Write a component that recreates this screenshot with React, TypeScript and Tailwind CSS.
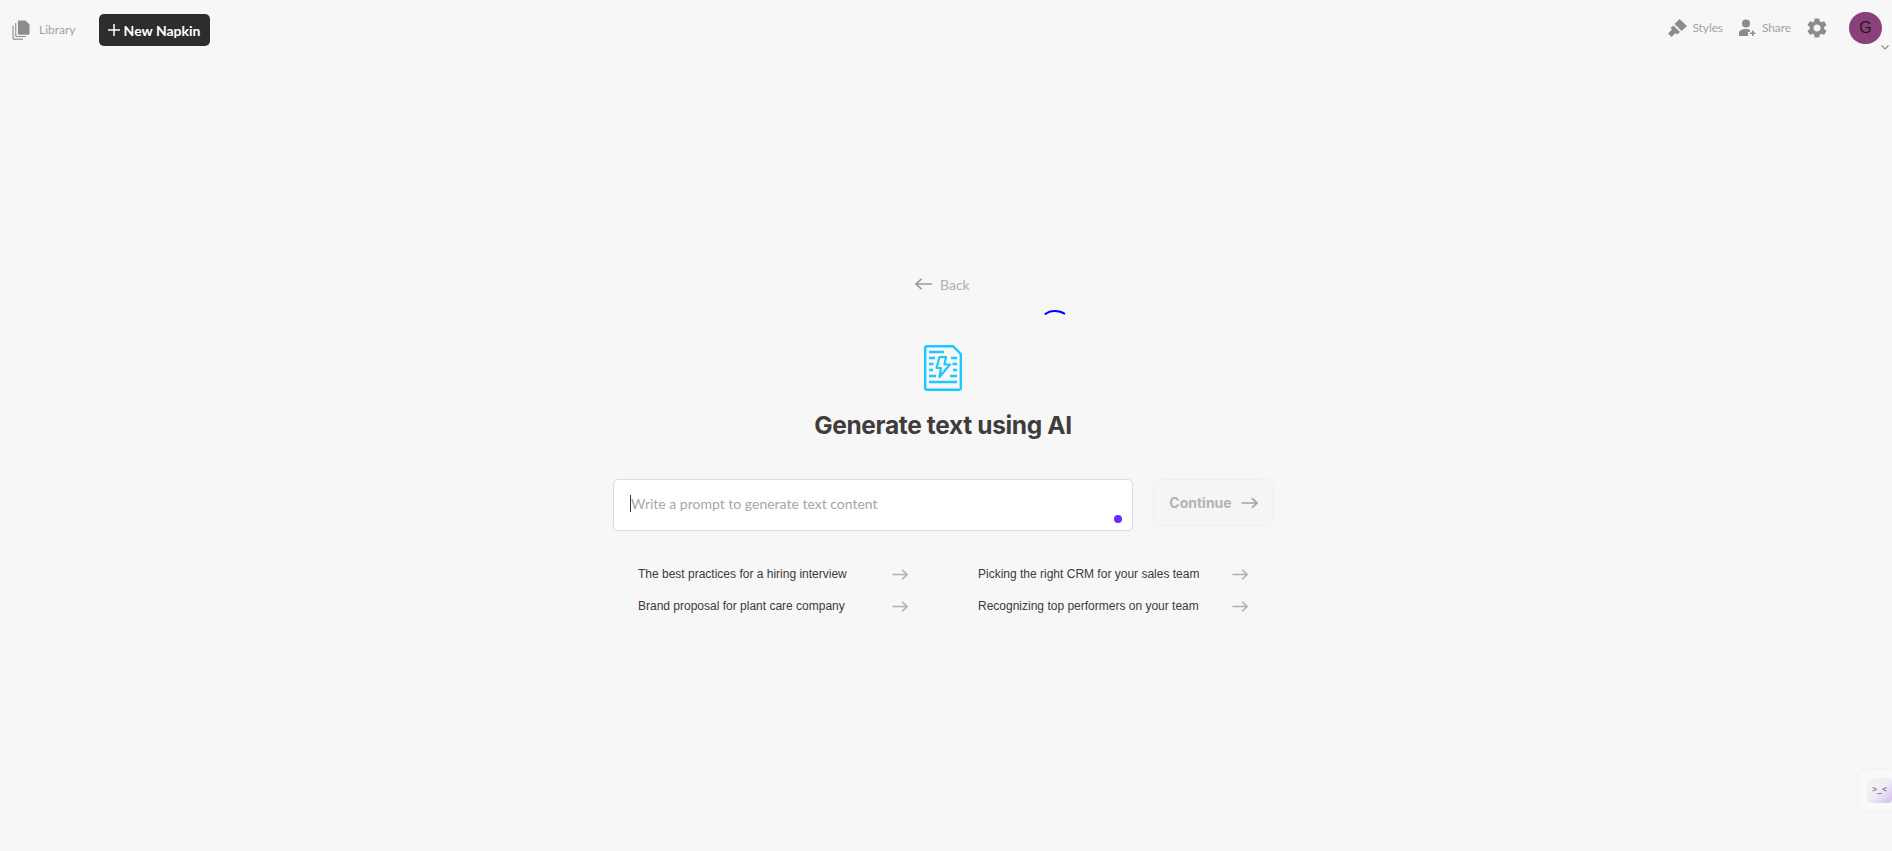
import React from "react";
import { MdSettings } from "react-icons/md";

const Arrow = ({ className = "" }: { className?: string }) => (
  <svg viewBox="0 0 18 12" className={className} fill="none" stroke="currentColor" strokeWidth="1.6">
    <path d="M0.5 6H17M11.5 0.8L17 6L11.5 11.2" />
  </svg>
);

const DocIcon = () => (
  <svg viewBox="0 0 38 46" className="w-[38px] h-[46px]" fill="none" stroke="#1cc8ff" strokeWidth="2.4">
    <path d="M3 1.200H29L36.800 9V43A1.800 1.800 0 0 1 35 44.800H3A1.800 1.800 0 0 1 1.200 43V3A1.800 1.800 0 0 1 3 1.200Z" strokeLinejoin="round" />
    <path d="M5 7H20M5 13H11M27 13H33M5 19H9.500M28.500 19H33M5 25H9M29 25H33M5 31H12M26 31H33M5 37H33" />
    <path d="M22 12H15.500L12.500 23H17L15.500 32L26 19.500H20.500L22 12Z" strokeLinejoin="round" strokeWidth="2.200" />
  </svg>
);

const suggestions = [
  ["The best practices for a hiring interview", "Picking the right CRM for your sales team"],
  ["Brand proposal for plant care company", "Recognizing top performers on your team"],
];

export default function App() {
  return (
    <div className="relative h-screen overflow-hidden bg-[#f7f7f7] font-['Lato',sans-serif]">
      <header className="flex h-[56px] items-start justify-between">
        <div className="flex items-center pl-[12px] pt-[14px]">
          <svg viewBox="0 0 18 20" className="h-[20px] w-[18px]" fill="#8c8c8c">
            <path d="M7.200 .5H13.500L17.500 4.500V13.500A1.300 1.300 0 0 1 16.200 14.800H7.200A1.300 1.300 0 0 1 5.900 13.500V1.800A1.300 1.300 0 0 1 7.200 .5Z" />
            <path d="M3.200 3V15.700A1.300 1.300 0 0 0 4.500 17H14V15.900H5A.7 .7 0 0 1 4.300 15.200V3Z" />
            <path d="M.5 5.500V18.500A1.300 1.300 0 0 0 1.800 19.800H11V18.600H2.300A.7 .7 0 0 1 1.600 17.900V5.500Z" />
          </svg>
          <span className="ml-[9px] text-[12px] text-[#a3a3a3]">Library</span>
          <button className="ml-[23px] flex h-[32px] w-[111px] items-center justify-center gap-[4px] rounded-[5px] bg-[#2d2d2d] text-[14px] font-bold text-white">
            <svg viewBox="0 0 12 12" className="h-[12px] w-[12px]" stroke="white" strokeWidth="1.500"><path d="M6 0V12M0 6H12" /></svg>
            New Napkin
          </button>
        </div>
        <div className="flex items-center pt-[12px]">
          <svg viewBox="0 0 19 18" className="h-[18px] w-[19px]" fill="#8c8c8c">
            <path d="M11.500 0L19 7L13.500 12L6.500 5Z" />
            <path d="M5.500 6.500L12 13L9 15.500L7.500 14L3.500 18L0 14.500L4 10.500L2.500 9Z" />
          </svg>
          <span className="ml-[5px] text-[12px] tracking-[-0.1px] text-[#a3a3a3]">Styles</span>
          <svg viewBox="0 0 18 18" className="ml-[16px] h-[18px] w-[18px]" fill="#8c8c8c">
            <circle cx="7" cy="4.500" r="4" />
            <path d="M0 17V14C0 11.500 3.500 10 7 10C8.500 10 10 10.300 11 10.800V13H9V17Z" />
            <path d="M13 11.500H14.500V13.500H16.500V15H14.500V17H13V15H11V13.500H13Z" />
          </svg>
          <span className="ml-[5px] text-[12px] tracking-[-0.1px] text-[#a3a3a3]">Share</span>
          <MdSettings className="ml-[14px] h-[24px] w-[24px] text-[#8c8c8c]" />
          <div className="relative ml-[20px] mr-[10px] h-[32px] w-[33px] rounded-full bg-[#8b3f7b] text-center text-[16px] leading-[32px] text-[#1a1a1a] font-['Liberation_Sans',sans-serif]">
            G
            <svg viewBox="0 0 8 5" className="absolute left-[32px] top-[33px] h-[5px] w-[8px]" fill="none" stroke="#8c8c8c" strokeWidth="1.200"><path d="M.5 .5L4 4L7.500 .5" /></svg>
          </div>
        </div>
      </header>

      <main className="mx-auto flex w-[666px] flex-col">
        <div className="relative mt-[217px] flex h-[22px] items-center pl-[302px] text-[#a8a8a8]">
          <svg viewBox="0 0 17 12" className="h-[12px] w-[17px] text-[#9a9a9a]" fill="none" stroke="currentColor" strokeWidth="1.600">
            <path d="M17 6H1M6.500 .8L1 6L6.500 11.200" />
          </svg>
          <span className="ml-[8px] text-[14px] text-[#b0b0b0]">Back</span>
          <svg viewBox="0 0 22 6" className="absolute left-[431px] top-[36px] h-[6px] w-[22px]" fill="none" stroke="#0000ff" strokeWidth="2">
            <path d="M.8 5.500C6 .8 15 .8 21 5" />
          </svg>
        </div>

        <div className="mt-[50px] flex flex-col items-center pr-[6px]">
          <DocIcon />
          <h1 className="mt-[16px] text-[24.5px] font-bold leading-[36px] tracking-[-0.35px] text-[#403c3c] font-['Inter',sans-serif]">
            Generate text using AI
          </h1>
        </div>

        <div className="mt-[36px] flex items-start gap-[20px]">
          <div className="relative h-[52px] w-[520px] rounded-[5px] border border-[#dcdcdc] bg-white pl-[16px] pt-[13px] text-[14px] leading-[22px]">
            <span className="border-l border-[#333] text-[#a6a6a6]">Write a prompt to generate text content</span>
            <span className="absolute right-[10px] bottom-[7px] h-[8px] w-[8px] rounded-full bg-[#6a2cff]" />
          </div>
          <button className="flex h-[47px] w-[120px] items-center justify-center gap-[9px] rounded-[8px] border border-[#efefef] bg-[#f5f5f5] pl-[1px] text-[14px] font-bold text-[#b3b3b3] shadow-[0_0_8px_rgba(0,0,0,0.02)] font-['Inter',sans-serif]">
            Continue
            <Arrow className="h-[12px] w-[17px] text-[#a3a3a3]" />
          </button>
        </div>

        <div className="mt-[36px] flex flex-col gap-[18px]">
          {suggestions.map((row) => (
            <div key={row[0]} className="flex h-[14px] items-center">
              {row.map((t) => (
                <div key={t} className="flex w-[340px] shrink-0 items-center pl-[25px] text-[12px] text-[#3a3a3a] font-['Liberation_Sans',sans-serif]">
                  <span className="w-[254px]">{t}</span>
                  <Arrow className="h-[11px] w-[16px] text-[#b0b0b0]" />
                </div>
              ))}
            </div>
          ))}
        </div>
      </main>

      <div className="absolute bottom-[41px] right-0 flex h-[40px] w-[33px] items-center justify-end rounded-l-[8px] bg-[#f9f9f9] shadow-[0_0_6px_rgba(0,0,0,0.03)]">
        <div className="flex h-[25px] w-[25px] items-center justify-center rounded-[4px] bg-gradient-to-br from-[#f4f4f4] via-[#efecf5] to-[#d4bdf0] text-[8px] font-bold text-[#808080] font-['DejaVu_Sans_Mono',monospace]">
          &gt;_&lt;
        </div>
      </div>
    </div>
  );
}
